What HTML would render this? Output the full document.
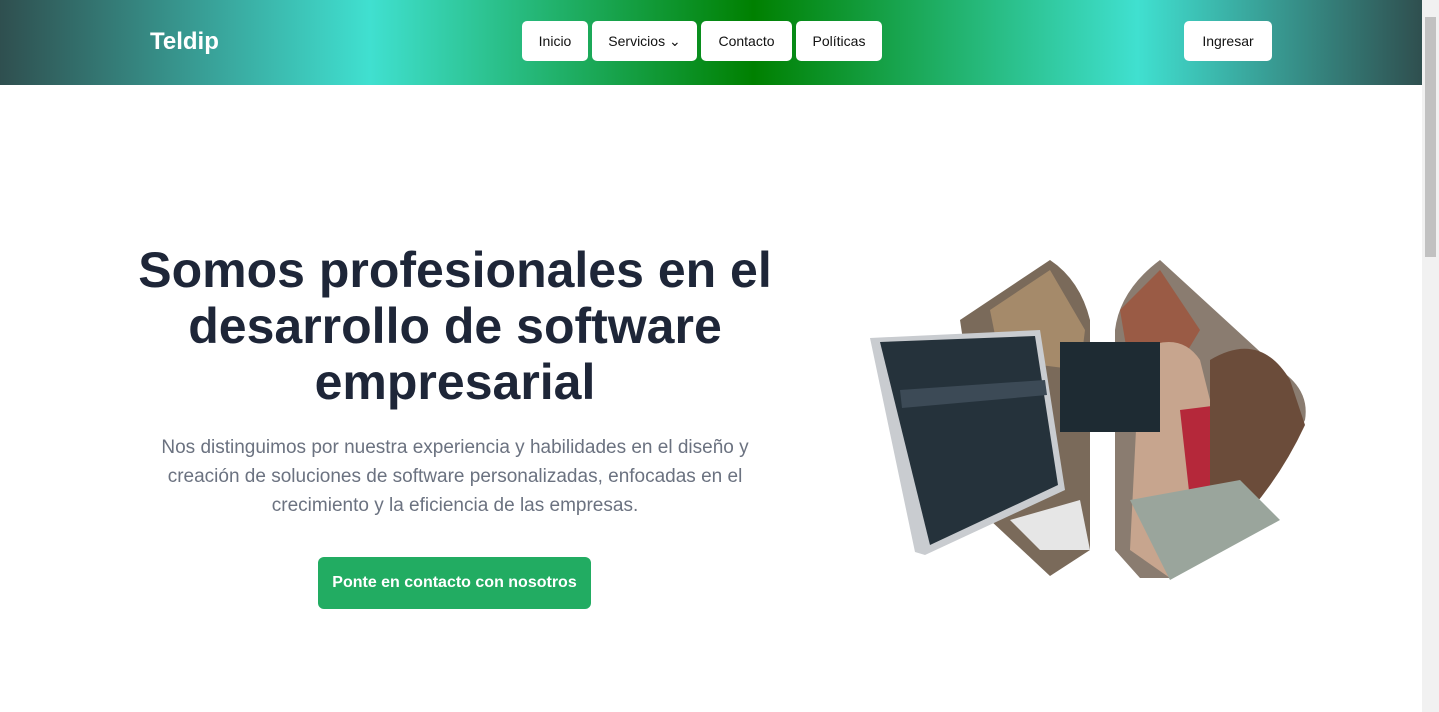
<!DOCTYPE html>
<html><head><meta charset="utf-8"><style>
*{margin:0;padding:0;box-sizing:border-box}
body{width:1439px;height:712px;overflow:hidden;background:#fff;font-family:"Liberation Sans",sans-serif;position:relative}
.hdr{position:absolute;left:0;top:0;width:1422px;height:85px;background:linear-gradient(to right,#2f4f4f,#40e0d0 26%,#008000 53%,#40e0d0 80%,#2f4f4f)}
.logo{position:absolute;left:150px;top:28px;color:#fff;font-weight:bold;font-size:24px}
.btn{position:absolute;top:21px;height:40px;background:#fff;border-radius:5px;font-size:14px;color:#111;display:flex;align-items:center;justify-content:center}
.sb{position:absolute;right:0;top:0;width:17px;height:712px;background:#f1f1f1}
.sb div{position:absolute;left:3px;top:17px;width:11px;height:240px;background:#c1c1c1}
h1{position:absolute;left:100px;top:242px;width:710px;text-align:center;font-size:50px;line-height:56px;color:#1e2638;font-weight:bold}
p{position:absolute;left:125px;top:433px;width:660px;text-align:center;font-size:19px;line-height:29px;color:#6b7280}
.cta{position:absolute;left:318px;top:557px;width:273px;height:52px;background:#22ac62;border-radius:6px;color:#fff;font-weight:bold;font-size:16px;display:flex;align-items:center;justify-content:center}
</style></head><body>
<div class="hdr">
<div class="logo">Teldip</div>
<div class="btn" style="left:522px;width:66px">Inicio</div>
<div class="btn" style="left:592px;width:105px">Servicios ⌄</div>
<div class="btn" style="left:701px;width:91px">Contacto</div>
<div class="btn" style="left:796px;width:86px">Políticas</div>
<div class="btn" style="left:1184px;width:88px">Ingresar</div>
</div>
<div class="sb"><div></div></div>
<h1>Somos profesionales en el desarrollo de software empresarial</h1>
<p>Nos distinguimos por nuestra experiencia y habilidades en el diseño y<br>creación de soluciones de software personalizadas, enfocadas en el<br>crecimiento y la eficiencia de las empresas.</p>
<div class="cta">Ponte en contacto con nosotros</div>
<svg style="position:absolute;left:840px;top:250px" width="480" height="340" viewBox="0 0 480 340">
<path d="M210 10 Q240 30 250 70 L250 300 L210 326 L150 270 L120 70 Z" fill="#7a6a5a"/>
<path d="M320 10 Q280 40 275 80 L275 300 L300 328 L330 328 Q430 240 465 170 Q470 140 440 120 Z" fill="#8a7c70"/>
<path d="M150 60 L210 20 L245 80 L240 120 L160 110 Z" fill="#a58a6a"/>
<path d="M280 60 L320 20 L360 80 L330 130 L290 120 Z" fill="#9a5b45"/>
<path d="M300 100 Q340 80 360 110 L370 150 L430 200 L400 280 L330 328 L290 300 Z" fill="#c7a58e"/>
<path d="M340 160 L420 150 L420 240 L350 250 Z" fill="#b5283a"/>
<path d="M370 110 Q420 80 450 130 L465 175 Q430 250 370 300 Z" fill="#6b4c3a"/>
<path d="M290 250 L400 230 L440 270 L330 330 Z" fill="#9aa59c"/>
<rect x="220" y="92" width="100" height="90" fill="#1e2b33"/>
<path d="M30 88 L200 80 L225 240 L85 305 L75 302 Z" fill="#c9ccd0"/>
<path d="M40 92 L195 86 L218 235 L90 295 Z" fill="#25323b"/>
<path d="M60 140 L205 130 L207 145 L62 158 Z" fill="#3c4a56"/>
<path d="M170 270 L240 250 L250 300 L200 300 Z" fill="#e6e6e6"/>
</svg>
</body></html>
